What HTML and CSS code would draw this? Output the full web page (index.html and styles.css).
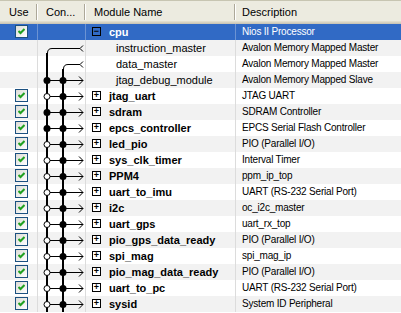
FILE: index.html
```html
<html><head>
<meta charset="UTF-8"><link rel="stylesheet" href="styles.css">
</head><body>
<div class="list">
  <div class="head">
    <div class="hcell">Use</div>
    <div class="hcell">Con...</div>
    <div class="hcell">Module Name</div>
    <div class="hcell">Description</div>
  </div>

  <div class="row sel">
    <div class="cell use"><span class="chk"><svg viewBox="0 0 7 7"><path d="M0.5 3 L2.5 5 L6.5 1"/></svg></span></div>
    <div class="cell con"></div>
    <div class="cell name top"><span class="box">&minus;</span>cpu</div>
    <div class="cell desc">Nios II Processor</div>
  </div>

  <div class="row alt">
    <div class="cell use"></div>
    <div class="cell con"><svg class="wire" viewBox="0 0 47 16"><path class="v" d="M9 16 V13"/><path class="h" d="M9.5 13 Q9.5 8.5 14 8.5 H42 M42 8.5 L45 5.5 M42 8.5 L45 11.5"/></svg></div>
    <div class="cell name child">instruction_master</div>
    <div class="cell desc">Avalon Memory Mapped Master</div>
  </div>

  <div class="row">
    <div class="cell use"></div>
    <div class="cell con"><svg class="wire" viewBox="0 0 47 16"><path class="v" d="M9 0 V16 M25 16 V13"/><path class="h" d="M25.5 13 Q25.5 8.5 30 8.5 H42 M42 8.5 L45 5.5 M42 8.5 L45 11.5"/></svg></div>
    <div class="cell name child">data_master</div>
    <div class="cell desc">Avalon Memory Mapped Master</div>
  </div>

  <div class="row alt">
    <div class="cell use"></div>
    <div class="cell con"><svg class="wire" viewBox="0 0 47 16"><path class="v" d="M9 0 V16 M25 0 V16"/><path class="h" d="M6 8.5 H45 M41 4.5 L45 8.5 L41 12.5"/><circle class="on" cx="9" cy="8.5" r="3.5"/><circle class="on" cx="25" cy="8.5" r="3.5"/></svg></div>
    <div class="cell name child">jtag_debug_module</div>
    <div class="cell desc">Avalon Memory Mapped Slave</div>
  </div>

  <div class="row">
    <div class="cell use"><span class="chk"><svg viewBox="0 0 7 7"><path d="M0.5 3 L2.5 5 L6.5 1"/></svg></span></div>
    <div class="cell con"><svg class="wire" viewBox="0 0 47 16"><path class="v" d="M9 0 V16 M25 0 V16"/><path class="h" d="M6 8.5 H45 M41 4.5 L45 8.5 L41 12.5"/><circle class="off" cx="9" cy="8.5" r="3"/><circle class="on" cx="25" cy="8.5" r="3.5"/></svg></div>
    <div class="cell name top"><span class="box">+</span>jtag_uart</div>
    <div class="cell desc">JTAG UART</div>
  </div>

  <div class="row alt">
    <div class="cell use"><span class="chk"><svg viewBox="0 0 7 7"><path d="M0.5 3 L2.5 5 L6.5 1"/></svg></span></div>
    <div class="cell con"><svg class="wire" viewBox="0 0 47 16"><path class="v" d="M9 0 V16 M25 0 V16"/><path class="h" d="M6 8.5 H45 M41 4.5 L45 8.5 L41 12.5"/><circle class="on" cx="9" cy="8.5" r="3.5"/><circle class="on" cx="25" cy="8.5" r="3.5"/></svg></div>
    <div class="cell name top"><span class="box">+</span>sdram</div>
    <div class="cell desc">SDRAM Controller</div>
  </div>

  <div class="row">
    <div class="cell use"><span class="chk"><svg viewBox="0 0 7 7"><path d="M0.5 3 L2.5 5 L6.5 1"/></svg></span></div>
    <div class="cell con"><svg class="wire" viewBox="0 0 47 16"><path class="v" d="M9 0 V16 M25 0 V16"/><path class="h" d="M6 8.5 H45 M41 4.5 L45 8.5 L41 12.5"/><circle class="on" cx="9" cy="8.5" r="3.5"/><circle class="on" cx="25" cy="8.5" r="3.5"/></svg></div>
    <div class="cell name top"><span class="box">+</span>epcs_controller</div>
    <div class="cell desc">EPCS Serial Flash Controller</div>
  </div>

  <div class="row alt">
    <div class="cell use"><span class="chk"><svg viewBox="0 0 7 7"><path d="M0.5 3 L2.5 5 L6.5 1"/></svg></span></div>
    <div class="cell con"><svg class="wire" viewBox="0 0 47 16"><path class="v" d="M9 0 V16 M25 0 V16"/><path class="h" d="M6 8.5 H45 M41 4.5 L45 8.5 L41 12.5"/><circle class="off" cx="9" cy="8.5" r="3"/><circle class="on" cx="25" cy="8.5" r="3.5"/></svg></div>
    <div class="cell name top"><span class="box">+</span>led_pio</div>
    <div class="cell desc">PIO (Parallel I/O)</div>
  </div>

  <div class="row">
    <div class="cell use"><span class="chk"><svg viewBox="0 0 7 7"><path d="M0.5 3 L2.5 5 L6.5 1"/></svg></span></div>
    <div class="cell con"><svg class="wire" viewBox="0 0 47 16"><path class="v" d="M9 0 V16 M25 0 V16"/><path class="h" d="M6 8.5 H45 M41 4.5 L45 8.5 L41 12.5"/><circle class="off" cx="9" cy="8.5" r="3"/><circle class="on" cx="25" cy="8.5" r="3.5"/></svg></div>
    <div class="cell name top"><span class="box">+</span>sys_clk_timer</div>
    <div class="cell desc">Interval Timer</div>
  </div>

  <div class="row alt">
    <div class="cell use"><span class="chk"><svg viewBox="0 0 7 7"><path d="M0.5 3 L2.5 5 L6.5 1"/></svg></span></div>
    <div class="cell con"><svg class="wire" viewBox="0 0 47 16"><path class="v" d="M9 0 V16 M25 0 V16"/><path class="h" d="M6 8.5 H45 M41 4.5 L45 8.5 L41 12.5"/><circle class="off" cx="9" cy="8.5" r="3"/><circle class="on" cx="25" cy="8.5" r="3.5"/></svg></div>
    <div class="cell name top"><span class="box">+</span>PPM4</div>
    <div class="cell desc">ppm_ip_top</div>
  </div>

  <div class="row">
    <div class="cell use"><span class="chk"><svg viewBox="0 0 7 7"><path d="M0.5 3 L2.5 5 L6.5 1"/></svg></span></div>
    <div class="cell con"><svg class="wire" viewBox="0 0 47 16"><path class="v" d="M9 0 V16 M25 0 V16"/><path class="h" d="M6 8.5 H45 M41 4.5 L45 8.5 L41 12.5"/><circle class="off" cx="9" cy="8.5" r="3"/><circle class="on" cx="25" cy="8.5" r="3.5"/></svg></div>
    <div class="cell name top"><span class="box">+</span>uart_to_imu</div>
    <div class="cell desc">UART (RS-232 Serial Port)</div>
  </div>

  <div class="row alt">
    <div class="cell use"><span class="chk"><svg viewBox="0 0 7 7"><path d="M0.5 3 L2.5 5 L6.5 1"/></svg></span></div>
    <div class="cell con"><svg class="wire" viewBox="0 0 47 16"><path class="v" d="M9 0 V16 M25 0 V16"/><path class="h" d="M6 8.5 H45 M41 4.5 L45 8.5 L41 12.5"/><circle class="off" cx="9" cy="8.5" r="3"/><circle class="on" cx="25" cy="8.5" r="3.5"/></svg></div>
    <div class="cell name top"><span class="box">+</span>i2c</div>
    <div class="cell desc">oc_i2c_master</div>
  </div>

  <div class="row">
    <div class="cell use"><span class="chk"><svg viewBox="0 0 7 7"><path d="M0.5 3 L2.5 5 L6.5 1"/></svg></span></div>
    <div class="cell con"><svg class="wire" viewBox="0 0 47 16"><path class="v" d="M9 0 V16 M25 0 V16"/><path class="h" d="M6 8.5 H45 M41 4.5 L45 8.5 L41 12.5"/><circle class="off" cx="9" cy="8.5" r="3"/><circle class="on" cx="25" cy="8.5" r="3.5"/></svg></div>
    <div class="cell name top"><span class="box">+</span>uart_gps</div>
    <div class="cell desc">uart_rx_top</div>
  </div>

  <div class="row alt">
    <div class="cell use"><span class="chk"><svg viewBox="0 0 7 7"><path d="M0.5 3 L2.5 5 L6.5 1"/></svg></span></div>
    <div class="cell con"><svg class="wire" viewBox="0 0 47 16"><path class="v" d="M9 0 V16 M25 0 V16"/><path class="h" d="M6 8.5 H45 M41 4.5 L45 8.5 L41 12.5"/><circle class="off" cx="9" cy="8.5" r="3"/><circle class="on" cx="25" cy="8.5" r="3.5"/></svg></div>
    <div class="cell name top"><span class="box">+</span>pio_gps_data_ready</div>
    <div class="cell desc">PIO (Parallel I/O)</div>
  </div>

  <div class="row">
    <div class="cell use"><span class="chk"><svg viewBox="0 0 7 7"><path d="M0.5 3 L2.5 5 L6.5 1"/></svg></span></div>
    <div class="cell con"><svg class="wire" viewBox="0 0 47 16"><path class="v" d="M9 0 V16 M25 0 V16"/><path class="h" d="M6 8.5 H45 M41 4.5 L45 8.5 L41 12.5"/><circle class="off" cx="9" cy="8.5" r="3"/><circle class="on" cx="25" cy="8.5" r="3.5"/></svg></div>
    <div class="cell name top"><span class="box">+</span>spi_mag</div>
    <div class="cell desc">spi_mag_ip</div>
  </div>

  <div class="row alt">
    <div class="cell use"><span class="chk"><svg viewBox="0 0 7 7"><path d="M0.5 3 L2.5 5 L6.5 1"/></svg></span></div>
    <div class="cell con"><svg class="wire" viewBox="0 0 47 16"><path class="v" d="M9 0 V16 M25 0 V16"/><path class="h" d="M6 8.5 H45 M41 4.5 L45 8.5 L41 12.5"/><circle class="off" cx="9" cy="8.5" r="3"/><circle class="on" cx="25" cy="8.5" r="3.5"/></svg></div>
    <div class="cell name top"><span class="box">+</span>pio_mag_data_ready</div>
    <div class="cell desc">PIO (Parallel I/O)</div>
  </div>

  <div class="row">
    <div class="cell use"><span class="chk"><svg viewBox="0 0 7 7"><path d="M0.5 3 L2.5 5 L6.5 1"/></svg></span></div>
    <div class="cell con"><svg class="wire" viewBox="0 0 47 16"><path class="v" d="M9 0 V16 M25 0 V16"/><path class="h" d="M6 8.5 H45 M41 4.5 L45 8.5 L41 12.5"/><circle class="off" cx="9" cy="8.5" r="3"/><circle class="on" cx="25" cy="8.5" r="3.5"/></svg></div>
    <div class="cell name top"><span class="box">+</span>uart_to_pc</div>
    <div class="cell desc">UART (RS-232 Serial Port)</div>
  </div>

  <div class="row alt">
    <div class="cell use"><span class="chk"><svg viewBox="0 0 7 7"><path d="M0.5 3 L2.5 5 L6.5 1"/></svg></span></div>
    <div class="cell con"><svg class="wire" viewBox="0 0 47 16"><path class="v" d="M9 0 V16 M25 0 V16"/><path class="h" d="M6 8.5 H45 M41 4.5 L45 8.5 L41 12.5"/><circle class="off" cx="9" cy="8.5" r="3"/><circle class="on" cx="25" cy="8.5" r="3.5"/></svg></div>
    <div class="cell name top"><span class="box">+</span>sysid</div>
    <div class="cell desc">System ID Peripheral</div>
  </div>
</div>
</body></html>
```

FILE: styles.css
```css
body { margin: 0; background: #fff; font-family: "Liberation Sans", Arial, sans-serif; font-size: 11px; }
.list { width: 401px; height: 313px; overflow: hidden; }

.head, .row { display: grid; grid-template-columns: 38px 48px 150px 1fr; }

.head { height: 24px; background: #ecebe0; border-top: 1px solid #c7c5b2;
	box-sizing: border-box;
	box-shadow: inset 0 -1px #cbc7b8, inset 0 -2px #d6d2c2, inset 0 -3px #e2decd;
}
.hcell { position: relative; line-height: 22px; padding-left: 8px; color: #000; white-space: nowrap; }
.hcell:first-child { padding-left: 9px; }
.hcell:nth-child(4) { padding-left: 6px; }
.hcell::after { content: ""; position: absolute; right: 0; top: 3px; bottom: 4px;
	border-left: 1px solid #aca899; border-right: 1px solid #fff; }
.hcell:nth-child(4)::after { display: none; }

.row { height: 16px; line-height: 16px; background: #fff; }
.row.alt { background: #f2f2f2; }
.row.sel { background: #316ac5; color: #fff; }

.cell { border-right: 1px solid #dcdcdc; white-space: nowrap; overflow: hidden; }
.sel .cell { border-right-color: #6c93d3; }
.cell.desc { border-right: none; padding-left: 6px; font-size: 10px; letter-spacing: -0.2px; }

.use { padding-left: 15px; }
.chk { display: inline-block; width: 11px; height: 11px; margin-top: 1px; vertical-align: top;
	border: 1px solid #1c5180; background: linear-gradient(135deg, #dcdcd7, #fff); }
.chk svg { display: block; width: 7px; height: 7px; margin: 2px; }
.chk path { fill: none; stroke: #21a121; stroke-width: 2; }

.wire { display: block; width: 47px; height: 16px; }
.wire path { fill: none; stroke: #000; }
.wire .v { stroke-width: 2; }
.wire .h { stroke-width: 1; }
.wire .on { fill: #000; }
.wire .off { fill: #fff; stroke: #000; stroke-width: 1; }

.name.top { font-weight: bold; padding-left: 6px; }
.name.child { padding-left: 30px; }
.box { display: inline-block; width: 7px; height: 7px; border: 1px solid #000; margin: 3px 8px 0 0;
	vertical-align: top; font-weight: bold; font-size: 9px; line-height: 6px; text-align: center; background: #fff; color: #000; }
.sel .box { background: transparent; color: #000; }
```
